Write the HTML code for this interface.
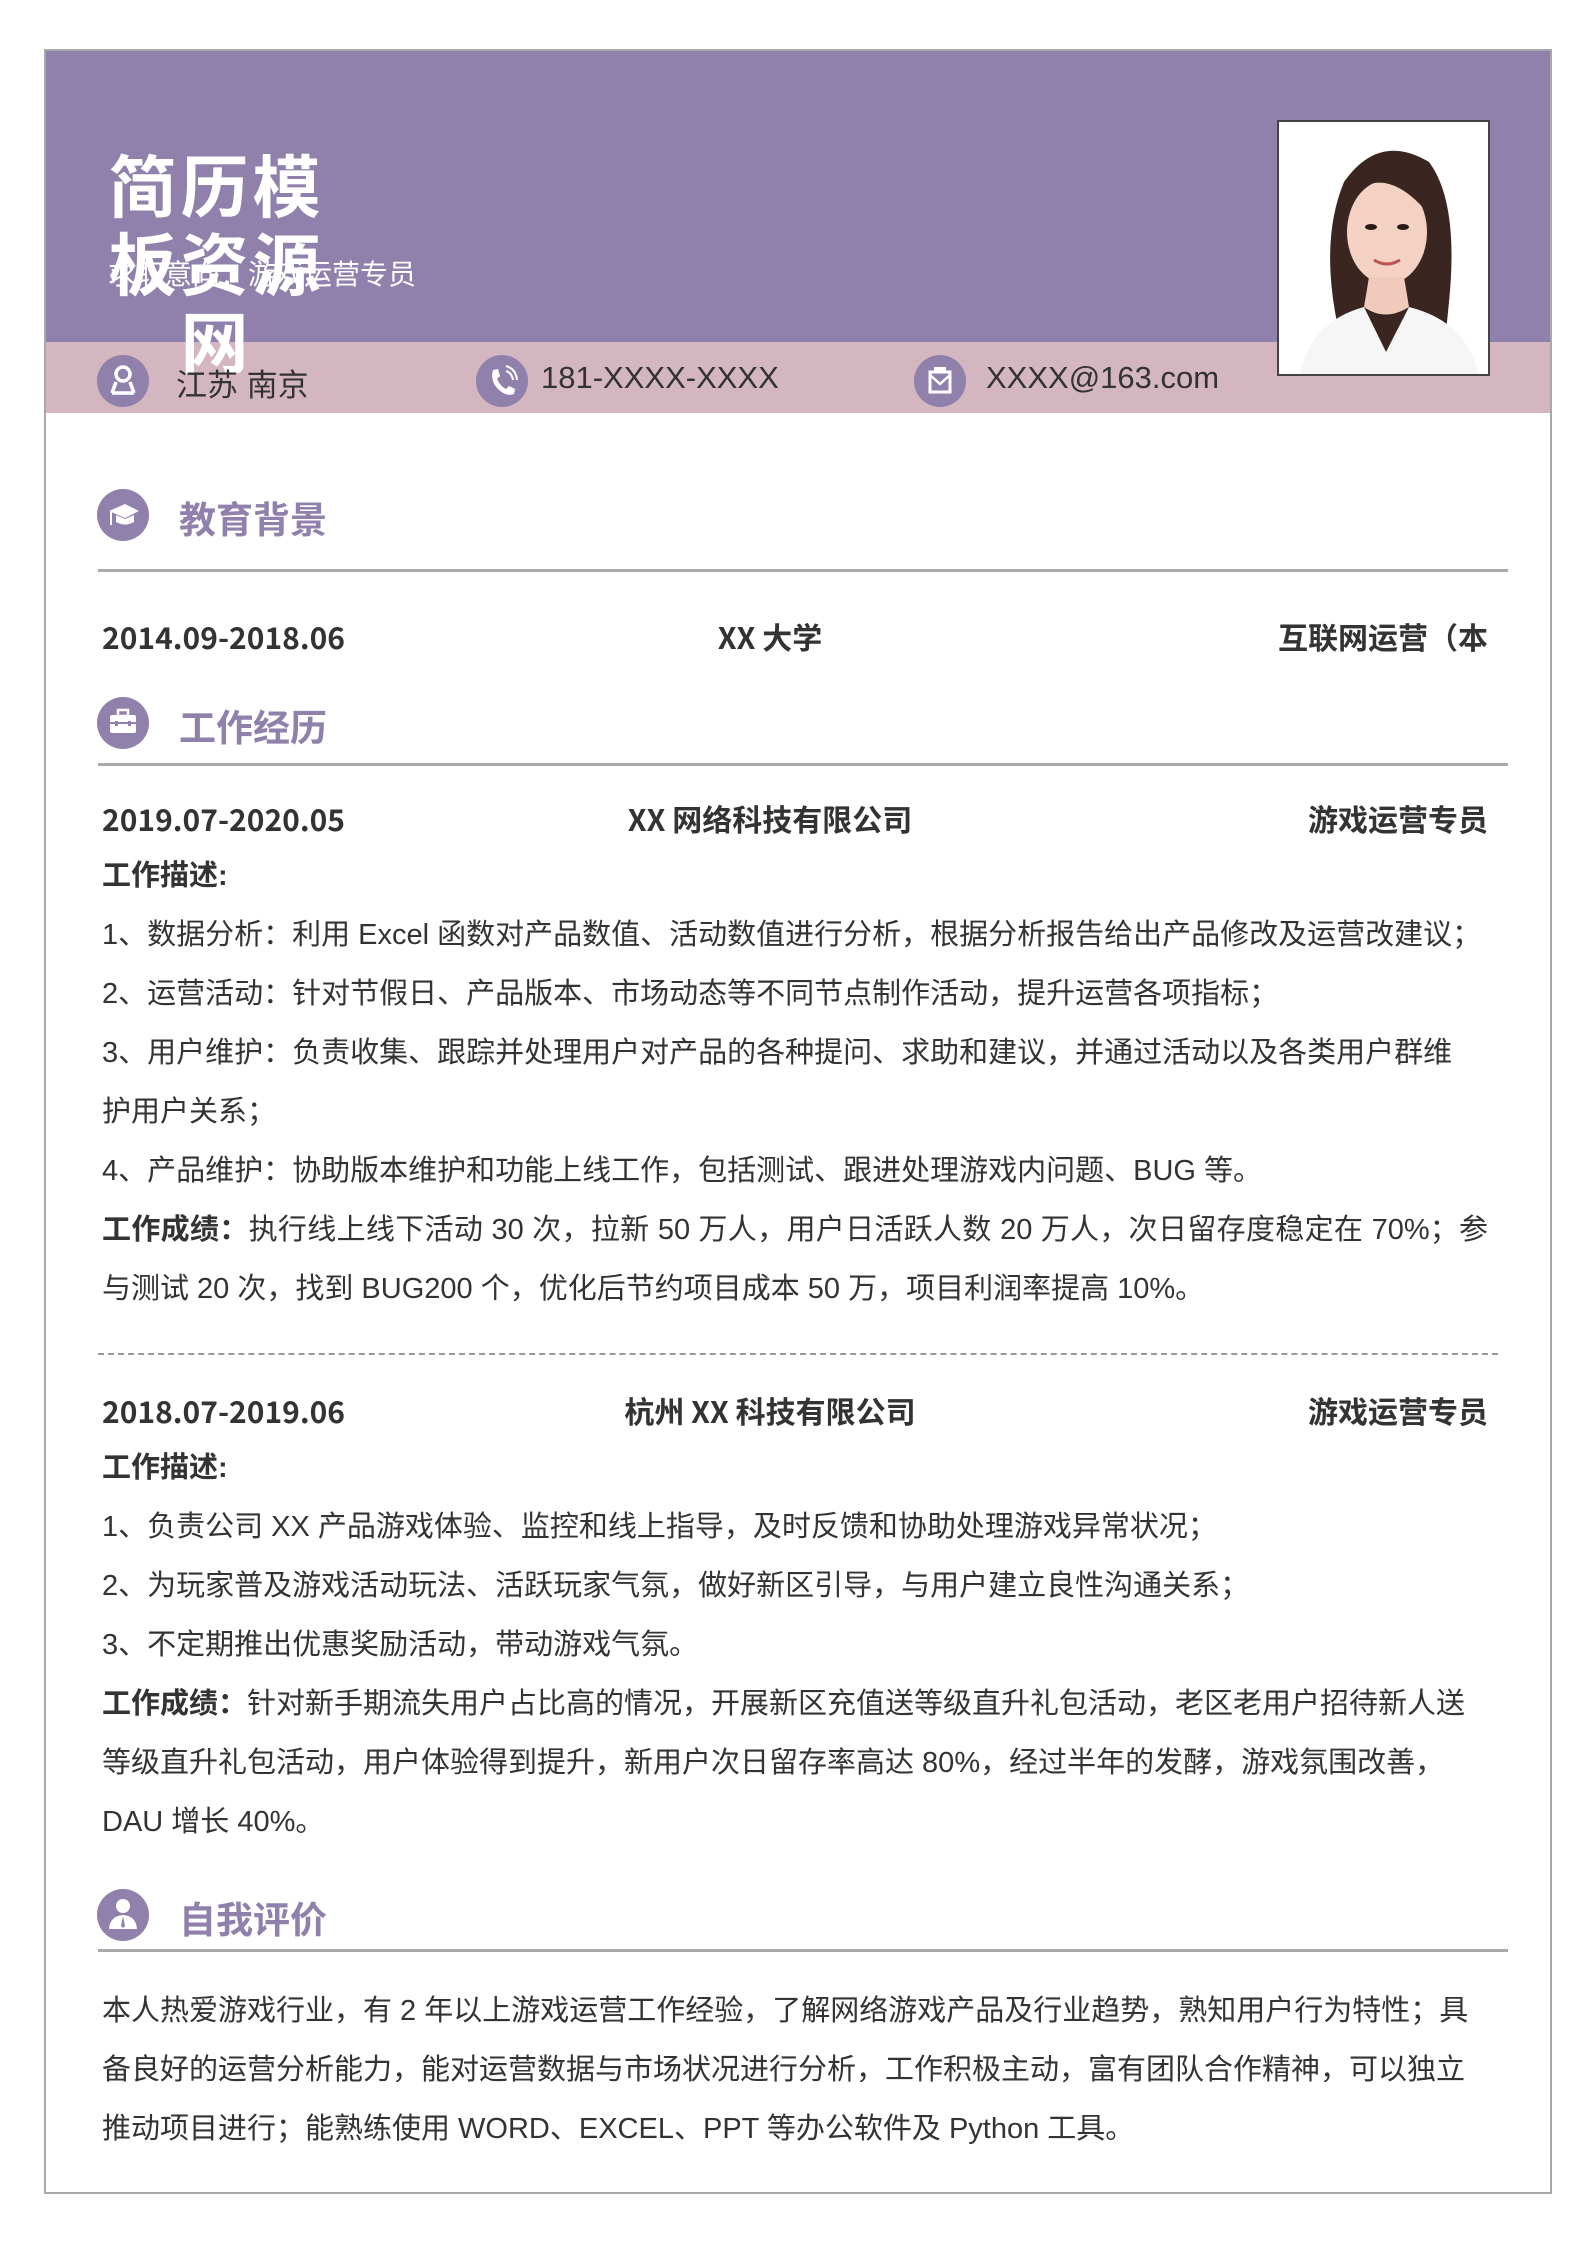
<!DOCTYPE html>
<html><head><meta charset="utf-8"><style>
*{margin:0;padding:0;box-sizing:border-box}
body{width:1587px;height:2245px;background:#fff;position:relative;font-family:"Liberation Sans","Noto Sans CJK SC",sans-serif;color:#333;overflow:hidden}
.frame{position:absolute;left:44px;top:49px;width:1508px;height:2145px;border:2px solid #a9a9a9}
.hdr{position:absolute;left:46px;top:51px;width:1504px;height:291px;background:#8f80ac}
.band{position:absolute;left:46px;top:342px;width:1504px;height:71px;background:#d4b6c0}
.abs{position:absolute;white-space:nowrap}
.title{left:104px;top:150px;color:#fff;font-weight:bold;font-size:68px;line-height:78px;width:225px;white-space:normal;letter-spacing:4px;text-align:center}
.sub{left:108px;top:253px;color:#fff;font-size:28px}
.ic{position:absolute;width:52px;height:52px;border-radius:50%;background:#8f80ac}
.ct{font-size:31px;color:#333;top:360px}
.photo{position:absolute;left:1277px;top:120px;width:213px;height:256px;border:2px solid #444;background:#fff;overflow:hidden}
.st{font-size:37px;font-weight:bold;color:#8f80ac;left:179px}
.line{position:absolute;left:98px;width:1410px;height:3px;background:#aaa}
.row{position:absolute;left:102px;width:1386px;font-size:30px;font-weight:bold;color:#333;height:44px}
.row span{position:absolute;top:0;white-space:nowrap;line-height:44px;height:44px;font-family:"Noto Sans CJK SC","Liberation Sans",sans-serif}
.row .m{left:668px;transform:translateX(-50%)}
.row .r{right:0}
.p{position:absolute;left:102px;width:1386px;font-size:29px;line-height:59px;text-align:justify;text-align-last:left}
b{font-weight:bold}
</style></head><body>
<div class="frame"></div>
<div class="hdr"></div>
<div class="band"></div>
<div class="abs sub">求职意向：游戏运营专员</div>
<div class="abs title">简历模板资源网</div>

<div class="ic" style="left:97px;top:355px"><svg width="52" height="52" viewBox="0 0 52 52"><circle cx="26" cy="19" r="7" fill="none" stroke="#fff" stroke-width="3.5"/><path d="M15 38 L19 27 M37 38 L33 27 M15 38 H37" stroke="#fff" stroke-width="3.5" fill="none"/></svg></div>
<div class="abs ct" style="left:176px">江苏 南京</div>
<div class="ic" style="left:476px;top:355px"><svg width="52" height="52" viewBox="0 0 52 52"><path d="M17 15 L22 14 L24 21 L21 24 Q24 31 30 34 L33 31 L39 34 L38 39 Q30 42 22 34 Q14 26 17 15Z" fill="#fff"/><path d="M30 16 Q36 18 37 25 M30 11 Q40 14 41 25" stroke="#fff" stroke-width="2" fill="none"/></svg></div>
<div class="abs ct" style="left:541px">181-XXXX-XXXX</div>
<div class="ic" style="left:914px;top:355px"><svg width="52" height="52" viewBox="0 0 52 52"><rect x="16" y="17" width="20" height="20" fill="none" stroke="#fff" stroke-width="3"/><path d="M16 20 L26 29 L36 20" stroke="#fff" stroke-width="2.5" fill="none"/><rect x="20" y="12" width="12" height="5" fill="#fff"/></svg></div>
<div class="abs ct" style="left:986px">XXXX@163.com</div>

<div class="photo"><svg width="213" height="256" viewBox="0 0 213 256">
<rect width="213" height="256" fill="#fff"/>
<path d="M60 210 Q40 120 65 60 Q100 10 150 40 Q180 80 170 180 L165 230 L60 240Z" fill="#3a2520"/>
<ellipse cx="108" cy="110" rx="40" ry="52" fill="#f3d2c3"/>
<path d="M90 155 L85 185 Q106 200 130 185 L125 155Z" fill="#f0cbbb"/>
<path d="M20 256 Q30 200 85 185 L107 230 L130 185 Q190 200 200 256Z" fill="#f6f6f6"/>
<path d="M70 75 Q105 40 148 90 Q140 55 108 55 Q75 55 70 75Z" fill="#3a2520"/>
<ellipse cx="92" cy="105" rx="6" ry="3" fill="#2a1a15"/><ellipse cx="124" cy="105" rx="6" ry="3" fill="#2a1a15"/>
<path d="M95 138 Q108 146 121 138" stroke="#b55" stroke-width="3" fill="none"/>
</svg></div>

<div class="ic" style="left:97px;top:489px"><svg width="52" height="52" viewBox="0 0 52 52"><path d="M12 22 L28 15 L42 22 L28 29Z" fill="#fff"/><path d="M19 26 V33 Q28 38 37 33 V26 L28 30Z" fill="#fff"/><path d="M14 23 V36" stroke="#fff" stroke-width="2"/></svg></div>
<div class="abs st" style="top:490px">教育背景</div>
<div class="line" style="top:569px"></div>
<div class="row" style="top:614px"><span>2014.09-2018.06</span><span class="m">XX 大学</span><span class="r">互联网运营（本</span></div>

<div class="ic" style="left:97px;top:697px"><svg width="52" height="52" viewBox="0 0 52 52"><rect x="13" y="18" width="26" height="18" rx="2" fill="#fff"/><rect x="21" y="13" width="10" height="6" fill="none" stroke="#fff" stroke-width="2.5"/><path d="M13 26 H39" stroke="#8f80ac" stroke-width="2"/><rect x="18" y="24" width="3" height="5" fill="#8f80ac"/><rect x="31" y="24" width="3" height="5" fill="#8f80ac"/></svg></div>
<div class="abs st" style="top:698px">工作经历</div>
<div class="line" style="top:763px"></div>
<div class="row" style="top:796px"><span>2019.07-2020.05</span><span class="m">XX 网络科技有限公司</span><span class="r">游戏运营专员</span></div>
<div class="p" style="top:847px"><b>工作描述:</b><br>1、数据分析：利用 Excel 函数对产品数值、活动数值进行分析，根据分析报告给出产品修改及运营改建议；<br>2、运营活动：针对节假日、产品版本、市场动态等不同节点制作活动，提升运营各项指标；<br>3、用户维护：负责收集、跟踪并处理用户对产品的各种提问、求助和建议，并通过活动以及各类用户群维<br>护用户关系；<br>4、产品维护：协助版本维护和功能上线工作，包括测试、跟进处理游戏内问题、BUG 等。<br><b>工作成绩：</b>执行线上线下活动 30 次，拉新 50 万人，用户日活跃人数 20 万人，次日留存度稳定在 70%；参与测试 20 次，找到 BUG200 个，优化后节约项目成本 50 万，项目利润率提高 10%。</div>
<div style="position:absolute;left:98px;top:1353px;width:1400px;border-top:2px dashed #999"></div>
<div class="row" style="top:1388px"><span>2018.07-2019.06</span><span class="m">杭州 XX 科技有限公司</span><span class="r">游戏运营专员</span></div>
<div class="p" style="top:1439px"><b>工作描述:</b><br>1、负责公司 XX 产品游戏体验、监控和线上指导，及时反馈和协助处理游戏异常状况；<br>2、为玩家普及游戏活动玩法、活跃玩家气氛，做好新区引导，与用户建立良性沟通关系；<br>3、不定期推出优惠奖励活动，带动游戏气氛。<br><b>工作成绩：</b>针对新手期流失用户占比高的情况，开展新区充值送等级直升礼包活动，老区老用户招待新人送<br>等级直升礼包活动，用户体验得到提升，新用户次日留存率高达 80%，经过半年的发酵，游戏氛围改善，<br>DAU 增长 40%。</div>

<div class="ic" style="left:97px;top:1889px"><svg width="52" height="52" viewBox="0 0 52 52"><circle cx="26" cy="17" r="7" fill="#fff"/><path d="M12 40 Q13 27 26 26 Q39 27 40 40Z" fill="#fff"/><path d="M26 27 L24 37 L26 39 L28 37Z" fill="#8f80ac"/></svg></div>
<div class="abs st" style="top:1890px">自我评价</div>
<div class="line" style="top:1949px"></div>
<div class="p" style="top:1982px">本人热爱游戏行业，有 2 年以上游戏运营工作经验，了解网络游戏产品及行业趋势，熟知用户行为特性；具<br>备良好的运营分析能力，能对运营数据与市场状况进行分析，工作积极主动，富有团队合作精神，可以独立<br>推动项目进行；能熟练使用 WORD、EXCEL、PPT 等办公软件及 Python 工具。</div>
</body></html>
